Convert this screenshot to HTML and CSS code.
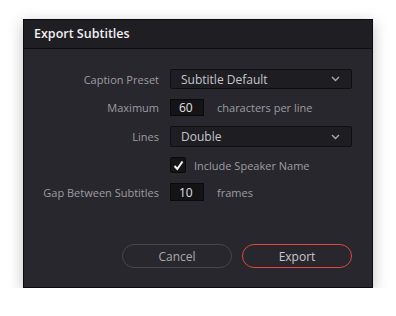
FILE: index.html
```html
<!DOCTYPE html>
<html lang="en">

<head>
    <meta charset="UTF-8">
    <title>Export Subtitles</title>
    <link rel="stylesheet" href="styles.css">
</head>

<body>
    <div class="dialog">
        <div class="dialog-header">Export Subtitles</div>
        <div class="dialog-body">
            <div class="form">
                <label class="label">Caption Preset</label>
                <div class="select">
                    <span>Subtitle Default</span>
                    <svg class="chevron" width="9" height="6" viewBox="0 0 9 6">
                        <path d="M1 1 L4.5 4.5 L8 1" fill="none" stroke="#a9a9ad" stroke-width="1.4" />
                    </svg>
                </div>

                <label class="label">Maximum</label>
                <div class="inline">
                    <div class="num">60</div>
                    <span class="unit">characters per line</span>
                </div>

                <label class="label">Lines</label>
                <div class="select">
                    <span>Double</span>
                    <svg class="chevron" width="9" height="6" viewBox="0 0 9 6">
                        <path d="M1 1 L4.5 4.5 L8 1" fill="none" stroke="#a9a9ad" stroke-width="1.4" />
                    </svg>
                </div>

                <span></span>
                <div class="inline">
                    <div class="checkbox">
                        <svg width="13" height="13" viewBox="0 0 13 13">
                            <path d="M2.5 7 L5.3 10 L10.5 2.5" fill="none" stroke="#f2f2f2" stroke-width="2" />
                        </svg>
                    </div>
                    <span class="check-text">Include Speaker Name</span>
                </div>

                <label class="label">Gap Between Subtitles</label>
                <div class="inline">
                    <div class="num">10</div>
                    <span class="unit">frames</span>
                </div>
            </div>

            <div class="actions">
                <button class="btn">Cancel</button>
                <button class="btn primary">Export</button>
            </div>
        </div>
    </div>
</body>

</html>
```

FILE: styles.css
```css
body {
    margin: 0;
    padding: 19px 0 0 23px;
    background: #ffffff;
    font-family: "Open Sans", "Liberation Sans", sans-serif;
}

.dialog {
    width: 348px;
    height: 267px;
    background: #28272d;
    border: 1px solid #0c0c0e;
    box-shadow: 0 4px 14px rgba(0, 0, 0, 0.25);
    display: flex;
    flex-direction: column;
}

.dialog-header {
    height: 28px;
    line-height: 28px;
    padding-left: 10px;
    background: #1f1e23;
    border-bottom: 1px solid #0e0e10;
    color: #f0f0f0;
    font-size: 12.5px;
    font-weight: 600;
}

.dialog-body {
    flex: 1;
    display: flex;
    flex-direction: column;
    padding: 20px 20px 0 0;
}

.form {
    display: grid;
    grid-template-columns: 135px 182px;
    grid-template-rows: 20px 17px 21px 16px 18px;
    column-gap: 11px;
    row-gap: 10px;
    align-items: center;
}

.label {
    text-align: right;
    color: #9d9da1;
    font-size: 11px;
}

.select {
    box-sizing: border-box;
    height: 100%;
    background: #1e1d22;
    border: 1px solid #0f0f11;
    border-radius: 2px;
    display: flex;
    align-items: center;
    justify-content: space-between;
    padding: 0 11px 0 10px;
    color: #c6c6ca;
    font-size: 12px;
}

.inline {
    display: flex;
    align-items: center;
    height: 100%;
}

.num {
    box-sizing: border-box;
    width: 34px;
    height: 100%;
    display: flex;
    align-items: center;
    padding-left: 8px;
    background: #141416;
    border: 1px solid #0a0a0b;
    color: #e2e2e4;
    font-size: 12px;
}

.unit {
    margin-left: 13px;
    color: #9d9da1;
    font-size: 11px;
}

.checkbox {
    box-sizing: border-box;
    width: 16px;
    height: 16px;
    background: #141416;
    border: 1px solid #0a0a0b;
    border-radius: 2px;
    display: flex;
    align-items: center;
    justify-content: center;
}

.check-text {
    margin-left: 8px;
    color: #9d9da1;
    font-size: 11px;
}

.actions {
    margin-top: auto;
    margin-bottom: 19px;
    display: flex;
    justify-content: flex-end;
    gap: 10px;
}

.btn {
    width: 110px;
    height: 24px;
    border-radius: 12px;
    background: transparent;
    border: 1px solid #47464c;
    color: #a9a9ad;
    font-family: "Open Sans", "Liberation Sans", sans-serif;
    font-size: 12px;
    cursor: pointer;
}

.btn.primary {
    border-color: #e0463c;
    color: #c9c9cc;
}
```
